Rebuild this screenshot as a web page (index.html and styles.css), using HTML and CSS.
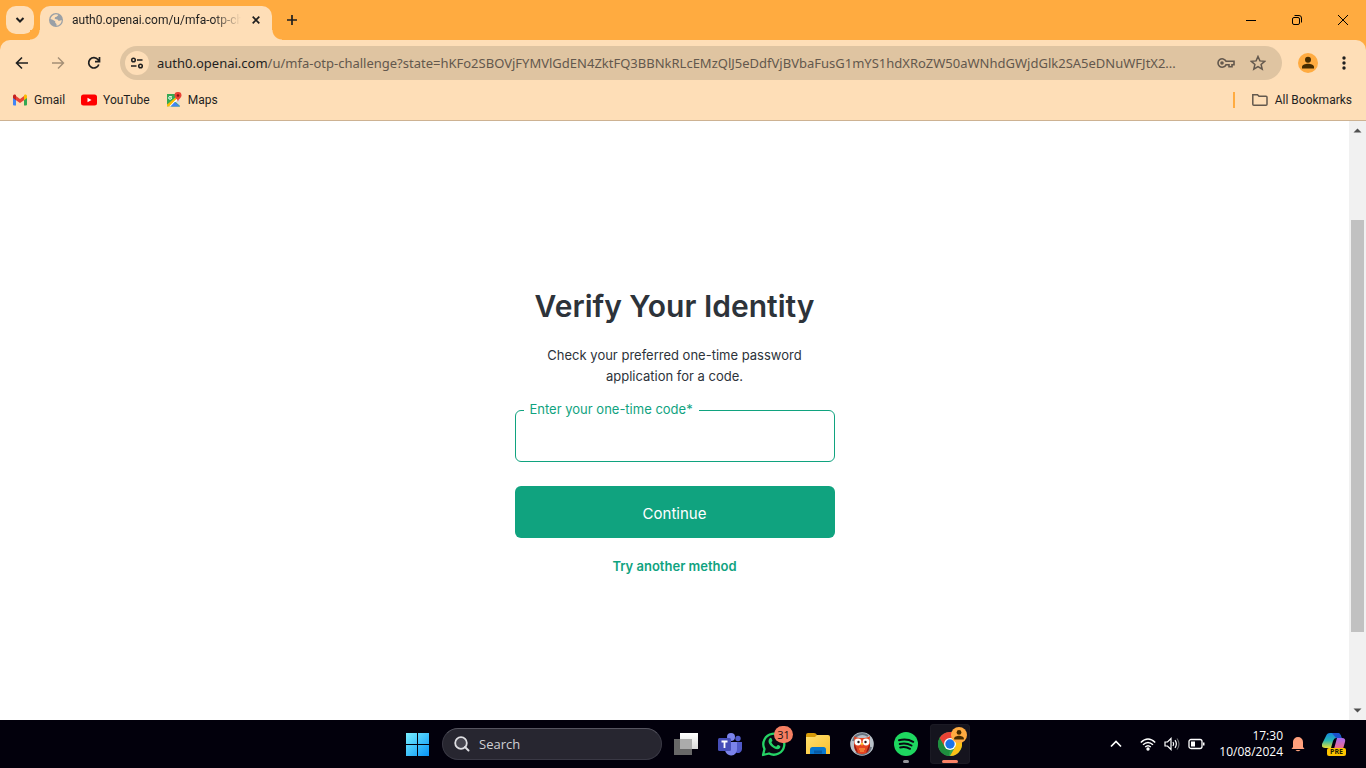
FILE: index.html
```html
<!DOCTYPE html>
<html lang="en">
<head>
<meta charset="utf-8">
<meta name="viewport" content="width=device-width, initial-scale=1">
<title>Verify Your Identity</title>
<link rel="stylesheet" href="styles.css">
</head>
<body>
<div class="desktop">
  <header class="chrome">
    <div class="tabstrip">
      <button class="tab-search" aria-label="Search tabs"><svg width="10" height="10" viewBox="0 0 10 10"><path d="M1.500 3 5 6.500 8.500 3" fill="none" stroke="#1f1f1f" stroke-width="2"/></svg></button>
      <div class="tab">
        <svg class="favicon" width="14" height="14" viewBox="0 0 14 14"><circle cx="7" cy="7" r="7" fill="#9aa0a6"/><path d="M7 1.200c1.600.1 1.900.5 2.200 1.100L7.600 3.800 6 4.200 5.700 5.700 7 6.300l1.500.2.9 1.300h1.300L12.700 7c0 3-2.200 5.500-5.200 5.700V11l-1.300-1.200V8.300L3.700 6.700 1.500 6C2 3.200 4.300 1.300 7 1.200Z" fill="#fedeb7"/><path d="M8 4.500l2-.7 1.800 1.500-.5 1.200-1.500-.3L8.600 5.500Z" fill="#9aa0a6"/></svg>
        <span class="tab-title">auth0.openai.com/u/mfa-otp-ch</span>
        <button class="tab-close" aria-label="Close tab"><svg width="8" height="8" viewBox="0 0 8 8"><path d="M.7.7l6.600 6.600M7.300.7.7 7.300" stroke="#1f1f1f" stroke-width="1.700"/></svg></button>
      </div>
      <button class="new-tab" aria-label="New tab"><svg width="12" height="12" viewBox="0 0 12 12"><path d="M6 1v10M1 6h10" stroke="#1f1f1f" stroke-width="1.700"/></svg></button>
      <div class="window-controls">
        <button aria-label="Minimize"><svg width="12" height="12" viewBox="0 0 12 12"><path d="M1 6.500h10" stroke="#000"/></svg></button>
        <button aria-label="Restore"><svg width="12" height="12" viewBox="0 0 12 12" fill="none" stroke="#000"><rect x="1.500" y="3.500" width="7" height="7" rx="1.500"/><path d="M3.500 1.500H8q2.500 0 2.500 2.500v4.500"/></svg></button>
        <button aria-label="Close window"><svg width="12" height="12" viewBox="0 0 12 12"><path d="M1 1l10 10M11 1 1 11" stroke="#000"/></svg></button>
      </div>
    </div>
    <div class="toolbar">
      <div class="nav">
        <button aria-label="Back"><svg width="14" height="14" viewBox="0 0 14 14"><path d="M13 7H2M7 1.500 1.500 7 7 12.500" fill="none" stroke="#1f1f1f" stroke-width="1.600"/></svg></button>
        <button aria-label="Forward" disabled><svg width="14" height="14" viewBox="0 0 14 14"><path d="M1 7h11M7 1.500 12.500 7 7 12.500" fill="none" stroke="#a48f76" stroke-width="1.400"/></svg></button>
        <button aria-label="Reload"><svg width="14" height="14" viewBox="0 0 14 14"><path d="M11.800 8.500A5.200 5.200 0 1 1 11 3.600L12.300 5M12.500 1v4.700H8" fill="none" stroke="#1f1f1f" stroke-width="1.700"/></svg></button>
      </div>
      <div class="omnibox">
        <button class="site-info" aria-label="View site information"><svg width="14" height="12" viewBox="0 0 14 12" fill="none" stroke="#1f1f1f" stroke-width="1.500"><circle cx="3.500" cy="3" r="1.800"/><path d="M7 3h5.500M1 9h5.500"/><circle cx="10.500" cy="9" r="1.800"/></svg></button>
        <div class="url"><span class="host">auth0.openai.com</span>/u/mfa-otp-challenge?state=hKFo2SBOVjFYMVlGdEN4ZktFQ3BBNkRLcEMzQlJ5eDdfVjBVbaFusG1mYS1hdXRoZW50aWNhdGWjdGlk2SA5eDNuWFJtX2...</div>
        <div class="omni-actions">
          <button aria-label="Manage passwords"><svg width="18" height="12" viewBox="0 0 18 12" fill="none" stroke="#63584d" stroke-width="1.600"><path d="M9 4.200A4.200 4.200 0 1 0 9 7.800h3v2h3v-2h2V4.200Z"/><circle cx="5" cy="6" r="1" fill="#63584d"/></svg></button>
          <button aria-label="Bookmark this tab"><svg width="16" height="16" viewBox="0 0 16 16"><path d="M8 1.500l1.900 4.400 4.800.4-3.600 3.200 1.100 4.700L8 11.700l-4.200 2.500 1.100-4.700L1.300 6.300l4.800-.4Z" fill="none" stroke="#63584d" stroke-width="1.500"/></svg></button>
        </div>
      </div>
      <button class="profile" aria-label="Profile"><svg width="20" height="20" viewBox="0 0 20 20"><circle cx="10" cy="10" r="10" fill="#ffab40"/><circle cx="10" cy="6.800" r="3" fill="#452b00"/><path d="M4 15.500v-1.500c0-2 3.500-3.200 6-3.200s6 1.200 6 3.200v1.500Z" fill="#452b00"/></svg></button>
      <button class="menu" aria-label="Chrome menu"><svg width="4" height="16" viewBox="0 0 4 16" fill="#1f1f1f"><circle cx="2" cy="3" r="1.700"/><circle cx="2" cy="8" r="1.700"/><circle cx="2" cy="13" r="1.700"/></svg></button>
    </div>
    <nav class="bookmarks" aria-label="Bookmarks">
      <a href="#"><svg width="16" height="16" viewBox="0 0 16 16"><path d="M1 4v8.500q0 1 1 1h2V6Z" fill="#4285f4"/><path d="M15 4v8.500q0 1-1 1h-2V6Z" fill="#34a853"/><path d="M4 4l4 3 4-3v4.300L8 11 4 8.300Z" fill="#ea4335"/><path d="M1 4c0-1.500 1.600-2 2.500-1.300L4 3.200v5.100L1 6Z" fill="#c5221f"/><path d="M15 4c0-1.500-1.600-2-2.500-1.300l-.5.5v5.100L15 6Z" fill="#fbbc04"/></svg><span>Gmail</span></a>
      <a href="#"><svg width="16" height="16" viewBox="0 0 16 16"><rect y="2.500" width="16" height="11" rx="2.500" fill="#f00"/><path d="M6.500 5.700v4.600l4-2.300Z" fill="#fff"/></svg><span>YouTube</span></a>
      <a href="#"><svg width="16" height="16" viewBox="0 0 16 16"><path d="M1 2h13v12.500H1Z" fill="#34a853"/><path d="M14 3.500V14L8 8.500Z" fill="#dadce0"/><path d="M1 14.500 12 3.500l2 2-9 9Z" fill="#fff"/><path d="M1 12.500v2h2L13 4.500l-1-1Z" fill="#fbbc04"/><path d="M4.500 14.500 8.700 10l5.300 4.500Z" fill="#4285f4"/><path d="M5.700 4.500H4.200a1.400 1.400 0 1 0 1.300 1.200H4.400" fill="none" stroke="#fff"/><path d="M12 0a3.400 3.400 0 0 1 3.500 3.500C15.500 6 12.500 6.500 12 10 11.500 6.500 8.500 6 8.500 3.500A3.400 3.400 0 0 1 12 0Z" fill="#ea4335"/><circle cx="12" cy="3.500" r="1.300" fill="#811"/></svg><span>Maps</span></a>
      <span class="divider"></span>
      <a href="#"><svg width="18" height="14" viewBox="0 0 18 14"><path d="M1.800 1.800h4.700L8 3.300h7q1 0 1 1v7q0 1-1 1H2.800q-1 0-1-1Z" fill="none" stroke="#63584d" stroke-width="1.500"/></svg><span>All Bookmarks</span></a>
    </nav>
  </header>

  <div class="viewport">
    <main class="page">
      <form class="card">
        <h1>Verify Your Identity</h1>
        <p>Check your preferred one-time password application for a code.</p>
        <div class="field">
          <input id="code" type="text" autocomplete="one-time-code" required>
          <label for="code">Enter your one-time code*</label>
        </div>
        <button class="continue" type="submit">Continue</button>
        <a class="other" href="#">Try another method</a>
      </form>
    </main>
    <div class="scrollbar" aria-hidden="true">
      <svg width="9" height="5" viewBox="0 0 9 5"><path d="M.5 4.500 4.500.5l4 4Z" fill="#505050"/></svg>
      <div class="track"><div class="thumb"></div></div>
      <svg width="9" height="5" viewBox="0 0 9 5"><path d="M.5.500h8l-4 4Z" fill="#505050"/></svg>
    </div>
  </div>

  <footer class="taskbar">
    <div class="apps">
      <button class="start" aria-label="Start"><svg width="24" height="24" viewBox="0 0 24 24"><defs><linearGradient id="win" gradientUnits="userSpaceOnUse" x1="0" y1="0" x2="24" y2="24"><stop stop-color="#7df3ff"/><stop offset="1" stop-color="#0794f7"/></linearGradient></defs><path d="M1 1h11v11H1ZM13 1h11v11H13ZM1 13h11v11H1ZM13 13h11v11H13Z" fill="url(#win)"/></svg></button>
      <button class="search"><svg width="18" height="18" viewBox="0 0 18 18"><circle cx="8" cy="8" r="5.800" fill="#46454f" stroke="#dedee2" stroke-width="1.800"/><path d="M12 12l3.500 3.500" stroke="#dedee2" stroke-width="2" stroke-linecap="round"/></svg><span>Search</span></button>
      <button class="app" aria-label="Task view"><svg width="24" height="24" viewBox="0 0 24 24"><defs><linearGradient id="tv" x1="0" y1="0" x2="0" y2="1"><stop stop-color="#fff"/><stop offset="1" stop-color="#d8d8d8"/></linearGradient></defs><path d="M0 7h18v16H0Z" fill="#686868"/><path d="M6 1h18v16H6Z" fill="url(#tv)"/><path d="M6 7h12v10H6Z" fill="#ababab"/></svg></button>
      <button class="app" aria-label="Teams"><svg width="24" height="24" viewBox="0 0 24 24"><circle cx="20" cy="6.500" r="2.700" fill="#5059c9"/><path d="M17 10h7v7a4 4 0 0 1-6 3.500Z" fill="#5059c9"/><circle cx="13" cy="5" r="4" fill="#7b83eb"/><path d="M7 10h12v7a6 6 0 0 1-12 1Z" fill="#7b83eb"/><rect y="6" width="13" height="13" rx="1.500" fill="#464eb8"/><path d="M3.500 9.500h6M6.500 9.500V16" stroke="#fff" stroke-width="1.800"/></svg></button>
      <button class="app" aria-label="WhatsApp"><svg width="26" height="26" viewBox="0 0 26 26"><path d="M2 24l1.500-6A10.500 10.500 0 1 1 8 22.500Z" fill="#080811" stroke="#25d366" stroke-width="2.300" stroke-linejoin="round"/><path d="M8.500 7.500c1-1.200 1.800-.8 2.200.2l.7 1.800c.2.600-.8 1.300-1 1.700 1 2.200 2.500 3.500 4.800 4.500l1.300-1.500c.7-.5 2 .4 2.800 1 .5 1.200-1 3-2.800 3-4.500-.3-9-5.200-9-8 0-1.200.4-2 1-2.700Z" fill="#25d366"/></svg><span class="badge">31</span></button>
      <button class="app" aria-label="File Explorer"><svg width="26" height="24" viewBox="0 0 26 24"><defs><linearGradient id="fold" x1="0" y1="0" x2="1" y2="1"><stop stop-color="#ffe071"/><stop offset="1" stop-color="#fbc02d"/></linearGradient></defs><path d="M1 3q0-2 2-2h6q2 0 3 2l1 2H1Z" fill="#d79a08"/><path d="M1 5h9l2-2h11q2 0 2 2v17H1Z" fill="url(#fold)"/><path d="M5 22v-4.500Q5 15 7.500 15h11q2.500 0 2.500 2.500V22Z" fill="#0877ce"/><path d="M9 18.500h8v3H9Z" fill="#075aa5"/></svg></button>
      <button class="app" aria-label="Owl app"><svg width="24" height="24" viewBox="0 0 24 24"><circle cx="12" cy="12" r="11.800" fill="#b8c0c9"/><path d="M3 9a9.500 9.500 0 0 1 15-5M21 15a9.500 9.500 0 0 1-15 5" fill="none" stroke="#697380" stroke-width="2"/><path d="M4 4q2 2 8 2t8-2q-1 4 0 8c0 6-2 10-8 10s-8-4-8-10q1-4 0-8Z" fill="#e64320"/><path d="M4 12c2 2 3 6 4 9-3-2-4-5-4-9Zm16 0c-2 2-3 6-4 9 3-2 4-5 4-9Z" fill="#8e1c16"/><circle cx="8" cy="10" r="3.400" fill="#fff"/><circle cx="16" cy="10" r="3.400" fill="#fff"/><circle cx="8.500" cy="10" r="1.200" fill="#25151a"/><circle cx="15.500" cy="10" r="1.200" fill="#25151a"/><path d="M10.500 11h3L12 14Z" fill="#ffcc35"/><path d="M9 17h6M10 19h4" stroke="#ffb247" stroke-width="1"/></svg></button>
      <button class="app running" aria-label="Spotify"><svg width="24" height="24" viewBox="0 0 24 24"><circle cx="12" cy="12" r="12" fill="#1ed760"/><path d="M5 8.200c5-1.300 10-.8 14.200 1.600M5.700 12c4-1 8.200-.6 11.800 1.500M6.200 15.500c3.500-.8 6.900-.4 9.800 1.300" fill="none" stroke="#080811" stroke-width="2" stroke-linecap="round"/></svg></button>
      <button class="app running active" aria-label="Google Chrome"><svg width="24" height="24" viewBox="0 0 24 24"><circle cx="12" cy="12" r="12" fill="#34a853"/><path d="M1.600 6A12 12 0 0 1 22.400 6H12L6.800 15Z" fill="#ea4335"/><path d="M12 6h10.400A12 12 0 0 1 12 24l5.200-9Z" fill="#fbc116"/><path d="M1.600 6 6.800 15 12 18l-1 6A12 12 0 0 1 1.600 6Z" fill="#1e8e3e"/><circle cx="12" cy="12" r="6" fill="#fff"/><circle cx="12" cy="12" r="4.700" fill="#1a73e8"/></svg><svg class="profile-badge" width="16" height="16" viewBox="0 0 20 20"><circle cx="10" cy="10" r="10" fill="#ffab40"/><circle cx="10" cy="6.800" r="3" fill="#452b00"/><path d="M4 15.500v-1.500c0-2 3.500-3.200 6-3.200s6 1.200 6 3.200v1.500Z" fill="#452b00"/></svg></button>
    </div>
    <div class="tray">
      <button class="overflow" aria-label="Show hidden icons"><svg width="12" height="8" viewBox="0 0 12 8"><path d="M1 6.500l5-5 5 5" fill="none" stroke="#fff" stroke-width="1.700"/></svg></button>
      <button class="status" aria-label="Network, sound and battery">
        <svg width="16" height="14" viewBox="0 0 16 14" fill="none" stroke="#fff" stroke-width="1.400"><path d="M.8 5.500q7.200-7 14.400 0M3 7.800q5-4.800 10 0M5.200 10.100q2.800-2.600 5.600 0"/><circle cx="8" cy="12" r="1" fill="#fff"/></svg>
        <svg width="16" height="14" viewBox="0 0 16 14" fill="none" stroke="#fff" stroke-width="1.200"><path d="M1 5h2.500L7 1.500v11L3.500 9H1ZM9 5q1.300 2 0 4M11 3.200q2.700 3.800 0 7.600"/><path d="M13 1.500q4 5.500 0 11" stroke="#65656b"/></svg>
        <svg width="17" height="12" viewBox="0 0 17 12"><rect x="1" y="1.500" width="13" height="9" rx="2" fill="none" stroke="#fff" stroke-width="1.300"/><path d="M3 3.500h4v5H3ZM15 4.500h1.500v3H15Z" fill="#fff"/></svg>
      </button>
      <button class="clock"><span>17:30</span><span>10/08/2024</span></button>
      <button class="bell" aria-label="Notifications"><svg width="14" height="16" viewBox="0 0 14 16"><path d="M2 11V6a5 5 0 0 1 10 0v5l1.500 2H.5ZM4.500 14h5Q7 16.500 4.500 14Z" fill="#ffa07d"/></svg></button>
      <button class="copilot" aria-label="Copilot"><svg width="24" height="24" viewBox="0 0 24 24"><defs><linearGradient id="cl" x1="0" y1="0" x2="0" y2="1"><stop stop-color="#1687df"/><stop offset=".5" stop-color="#26b6b2"/><stop offset="1" stop-color="#e8df34"/></linearGradient><linearGradient id="cr" x1="0" y1="0" x2="0" y2="1"><stop stop-color="#a66af0"/><stop offset="1" stop-color="#f56a83"/></linearGradient></defs><path d="M4 4q1-3 4-3h8q2 0 3 3l.5 2H14q-2 0-3 3l-2 7H3q-4 0-3-4Z" fill="url(#cl)"/><path d="M10 1h6q2 0 3 3l.5 2H14Z" fill="#1b50cb"/><path d="M15 6h5q4 0 3 4l-2 7h-9Z" fill="url(#cr)"/></svg><span class="pre">PRE</span></button>
    </div>
  </footer>
</div>
</body>
</html>
```
FILE: styles.css
```css
* { box-sizing: border-box; }
body { margin: 0; font-family: "Open Sans", "Noto Sans", sans-serif; color: #1f1f1f; }
button { border: 0; padding: 0; margin: 0; background: none; font: inherit; color: inherit; display: flex; align-items: center; justify-content: center; }
svg { display: block; flex: none; }
a { text-decoration: none; color: inherit; }

.desktop { display: flex; flex-direction: column; min-height: 100vh; }

/* Browser frame */
.chrome { background: #ffab40; border-bottom: 1px solid #cdb292; }
.tabstrip { display: flex; align-items: flex-end; height: 40px; padding-left: 6px; }
.tab-search { width: 28px; height: 28px; margin: 0 6px 6px 0; border-radius: 10px; background: #fedeb7; }
.tab { position: relative; display: flex; align-items: center; width: 232px; height: 34px; padding: 0 8px 6px 9px; border-radius: 10px 10px 0 0; background: #fedeb7; }
.tab::before, .tab::after { content: ""; position: absolute; bottom: 0; width: 10px; height: 10px; }
.tab::before { right: 100%; background: radial-gradient(circle at 0 0, #ffab40 9px, #fedeb7 10px); }
.tab::after { left: 100%; background: radial-gradient(circle at 100% 0, #ffab40 9px, #fedeb7 10px); }
.tab-title { flex: 1; margin: 0 0 0 9px; white-space: nowrap; font-family: Roboto, sans-serif; font-size: 12px; line-height: 16px; mask-image: linear-gradient(to right, #000 80%, transparent 96%); }
.tab-close { width: 16px; height: 16px; }
.new-tab { width: 28px; height: 28px; margin: 0 0 6px 6px; }
.window-controls { display: flex; align-self: stretch; margin-left: auto; }
.window-controls button { width: 46px; }

.toolbar { display: flex; align-items: center; height: 46px; padding: 0 8px; background: #fedeb7; border-radius: 10px 10px 0 0; }
.nav { display: flex; gap: 8px; margin-right: 12px; }
.nav button, .profile, .menu { width: 28px; height: 28px; }
.profile { margin: 0 8px 0 12px; }
.omnibox { flex: 1; min-width: 0; display: flex; align-items: center; height: 34px; padding: 0 16px 0 5px; border-radius: 17px; background: #dfc4a1; }
.site-info { flex: none; width: 24px; height: 24px; border-radius: 50%; background: #fedeb7; }
.url { flex: 1; min-width: 0; margin: 0 8px; overflow: hidden; white-space: nowrap; font-family: "Noto Sans", sans-serif; font-size: 13px; line-height: 20px; color: #63584d; }
.host { color: #1f1f1f; }
.omni-actions { display: flex; gap: 15px; }

.bookmarks { display: flex; align-items: center; gap: 16px; height: 34px; padding: 0 14px 6px 12px; background: #fedeb7; font-family: Roboto, sans-serif; font-size: 12px; line-height: 16px; }
.bookmarks a { display: flex; align-items: center; gap: 6px; }
.divider { width: 2px; height: 16px; margin-left: auto; background: #ffab40; }

/* Web page */
.viewport { flex: 1; display: flex; background: #fff; }
.page { flex: 1; display: flex; justify-content: center; padding: 160px 16px 32px; font-family: Inter, "Open Sans", sans-serif; color: #2d333a; }
.card { display: flex; flex-direction: column; width: 320px; text-align: center; }
.card h1 { margin: 0 0 14px; font-size: 30px; line-height: 50px; font-weight: 600; white-space: nowrap; }
.card p { margin: 0 24px 23px; font-size: 13px; line-height: 21px; }
.field { position: relative; display: flex; margin-bottom: 24px; }
.field input { width: 100%; height: 52px; padding: 0 16px; border: 1px solid #10a37f; border-radius: 6px; outline: 0; background: #fff; font: inherit; font-size: 16px; }
.field label { position: absolute; left: 9px; top: -10px; padding: 0 6px; background: #fff; color: #10a37f; font-size: 13px; line-height: 18px; }
.continue { height: 52px; padding-top: 4px; border-radius: 6px; background: #10a37f; color: #fff; font-size: 15px; line-height: 24px; }
.other { align-self: center; margin-top: 18px; color: #10a37f; font-size: 13px; line-height: 20px; font-weight: 600; }

.scrollbar { display: flex; flex-direction: column; align-items: center; width: 17px; padding: 7px 0; background: #f1f1f1; }
.track { flex: 1; width: 13px; display: flex; flex-direction: column; padding: 87px 0 76px; }
.thumb { flex: 1; background: #c1c1c1; }

/* Taskbar */
.taskbar { display: grid; grid-template-columns: 1fr auto 1fr; align-items: center; height: 48px; background: #02000c; color: #fff; }
.apps { grid-column: 2; display: flex; align-items: center; gap: 4px; }
.start { width: 42px; height: 40px; }
.search { width: 220px; height: 32px; justify-content: flex-start; gap: 8px; padding-left: 10px; border: 1px solid #393844; border-top-color: #55545f; border-radius: 16px; background: #272630; color: #d0d0d4; font-size: 13px; line-height: 20px; }
.app { position: relative; width: 40px; height: 40px; border-radius: 4px; }
.app.active { background: #15141e; box-shadow: inset 0 0 0 1px #1b1a24; }
.app.running::after { content: ""; position: absolute; bottom: 1px; left: 17px; width: 6px; height: 3px; border-radius: 2px; background: #94949a; }
.app.active::after { left: 12px; width: 16px; background: #fb8266; }
.badge { position: absolute; left: 20px; top: 2px; width: 19px; height: 17px; border-radius: 9px; background: #f57f62; color: #201010; font-size: 11px; line-height: 17px; text-align: center; }
.profile-badge { position: absolute; right: 3px; top: 3px; }
.tray { justify-self: end; display: flex; align-items: center; padding-right: 20px; }
.overflow { width: 24px; height: 40px; margin-right: 12px; }
.status { gap: 8px; height: 40px; }
.clock { flex-direction: column; align-items: flex-end; margin-left: 14px; font-size: 12px; line-height: 16px; }
.bell { margin: 0 17px 0 8px; }
.copilot { position: relative; width: 24px; height: 40px; }
.pre { position: absolute; left: 5px; bottom: 8px; width: 19px; height: 8px; border-radius: 2px; background: #ffc400; color: #231a00; font-size: 7px; line-height: 8px; font-weight: 700; text-align: center; }
```
